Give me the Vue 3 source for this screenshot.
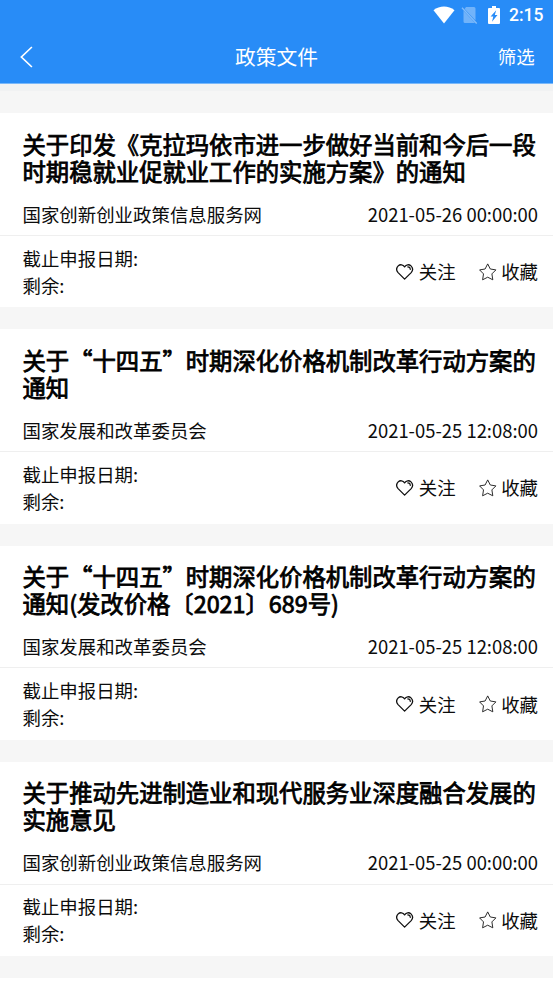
<script setup>
const policies = [
  { title: '关于印发《克拉玛依市进一步做好当前和今后一段时期稳就业促就业工作的实施方案》的通知', source: '国家创新创业政策信息服务网', time: '2021-05-26 00:00:00' },
  { title: '关于“十四五”时期深化价格机制改革行动方案的通知', source: '国家发展和改革委员会', time: '2021-05-25 12:08:00' },
  { title: '关于“十四五”时期深化价格机制改革行动方案的通知(发改价格〔2021〕689号)', source: '国家发展和改革委员会', time: '2021-05-25 12:08:00' },
  { title: '关于推动先进制造业和现代服务业深度融合发展的实施意见', source: '国家创新创业政策信息服务网', time: '2021-05-25 00:00:00' },
]
</script>

<template>
  <div class="page" lang="zh-CN">
    <header class="header">
      <div class="status">
        <svg class="wifi" width="22" height="18" viewBox="0 0 22 18"><path d="M0.5 4.2C6.5-.6 15.5-.6 21.5 4.2L11 17.4Z" fill="#fff" /></svg>
        <svg class="sim" width="17" height="18" viewBox="0 0 17 18">
          <path d="M5 1H13Q14.5 1 14.5 2.5V14.6L3.6 3Z M2.5 4.8L14 17H4Q2.5 17 2.5 15.5Z" fill="#fff" opacity=".34" />
          <path d="M1 1.8L15.7 17.5" stroke="#fff" stroke-width="1.3" opacity=".42" />
        </svg>
        <svg class="battery" width="12" height="18" viewBox="0 0 12 18">
          <path d="M1 2H4V0H8V2H11Q12 2 12 3V17Q12 18 11 18H1Q0 18 0 17V3Q0 2 1 2Z" fill="#fff" />
          <path d="M8.2 4.2L2.6 10.5H5.3L4 15.8L9.5 9H6.8Z" fill="#288cf7" />
        </svg>
        <span class="clock">2:15</span>
      </div>
      <nav class="nav">
        <svg class="back" width="15" height="22" viewBox="0 0 15 22"><path d="M12.9 1L2.4 11L12.9 21" fill="none" stroke="#fff" stroke-width="1.7" /></svg>
        <h1>政策文件</h1>
        <span class="filter">筛选</span>
      </nav>
    </header>
    <div class="strip"></div>
    <main class="list">
      <article v-for="(item, i) in policies" :key="i" class="card">
        <h2>{{ item.title }}</h2>
        <div class="meta"><span>{{ item.source }}</span><time>{{ item.time }}</time></div>
        <div class="bottom">
          <div class="deadline"><div>截止申报日期:</div><div>剩余:</div></div>
          <div class="actions">
            <span class="action">
              <svg width="18" height="18" viewBox="0 0 18 18" fill="none" stroke="#111" stroke-width="1.3" stroke-linecap="round" stroke-linejoin="round">
                <path d="M8.6 3.9C7 1.4 4.1 1.1 2.2 2.9C.3 4.8 .4 7.6 2.1 9.6L8.6 16.1L15.2 9.6C16.9 7.6 16.9 4.8 15 2.9C13.1 1.1 10.2 1.4 8.6 3.9Z" />
                <path d="M11.8 3.9C13.4 3.9 14.3 4.9 14.3 6.4" stroke-width="1.1" />
              </svg>关注
            </span>
            <span class="action">
              <svg width="18" height="18" viewBox="0 0 18 18" fill="none" stroke="#222" stroke-width=".95" stroke-linejoin="round">
                <path d="M8.7 .9L11.3 6L16.9 6.9L12.9 10.9L13.8 16.8L8.7 14.2L3.6 16.8L4.5 10.9L.6 6.9L6.1 6Z" />
              </svg>收藏
            </span>
          </div>
        </div>
      </article>
    </main>
  </div>
</template>

<style>
body { margin: 0; background: #fff; overflow: hidden; }
</style>

<style scoped>
.page { height: 983px; overflow: hidden; background: #fff; color: #0c0c0c; font-family: "Noto Sans CJK SC", sans-serif; font-size: 18.43px; }
.header { height: 84px; background: #288cf7; color: #fff; border-bottom: 1px solid #79b8fa; box-sizing: border-box; }
.status { height: 29px; display: flex; align-items: center; justify-content: flex-end; padding-right: 9.5px; box-sizing: border-box; }
.wifi { margin-right: 6px; }
.sim { margin-right: 10px; }
.battery { margin-right: 9px; }
.clock { font: 500 17.5px/30px Roboto, sans-serif; padding-top: 1px; }
.nav { height: 53px; display: grid; grid-template-columns: 1fr auto 1fr; align-items: center; padding: 0 18.3px 0 18.5px; }
.back { position: relative; top: 1px; }
.nav h1 { margin: 0; font-size: 20.75px; font-weight: 400; line-height: 30px; }
.filter { justify-self: end; line-height: 28px; }
.strip { height: 29px; box-sizing: border-box; background: #f6f6f6; border-top: 7px solid #f1f2f3; }
.card { height: 216.25px; box-sizing: border-box; border-bottom: 22px solid #f6f6f6; display: flex; flex-direction: column; }
.card h2 { margin: 0; padding: 17.7px 15px 0 22.5px; height: 54px; font-size: 23.33px; line-height: 27px; font-weight: 400; color: #000; -webkit-text-stroke: .8px #000; word-break: break-all; }
.meta { height: 51.1px; box-sizing: border-box; padding: 15px 15px 0 22.5px; display: flex; justify-content: space-between; line-height: 28px; border-bottom: 1px solid #efefef; }
.bottom { flex: 1; display: flex; justify-content: space-between; align-items: center; padding: 0 15px 0 22.5px; line-height: 27px; }
.deadline { padding-top: .2px; }
.actions { display: flex; gap: 23px; }
.action { display: flex; align-items: center; gap: 4.5px; }
</style>
